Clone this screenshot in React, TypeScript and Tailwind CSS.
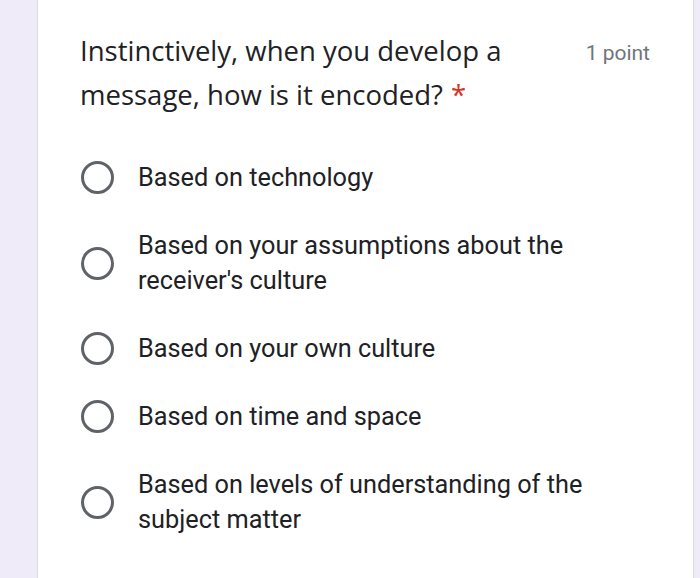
const options = [
  "Based on technology",
  "Based on your assumptions about the receiver's culture",
  "Based on your own culture",
  "Based on time and space",
  "Based on levels of understanding of the subject matter",
];

function Radio() {
  return (
    <div className="w-[33px] h-[33px] shrink-0 rounded-full border-[3px] border-[#5f6368]" />
  );
}

export default function App() {
  return (
    <div className="w-[700px] h-[578px] overflow-hidden bg-[#f0ebf8] pl-[37px] pr-[6px]">
      <div className="h-full bg-white border-x border-[#dadce0] pl-[42px] pr-[43px] pt-[29px]">
        <div className="flex items-start justify-between">
          <div
            className="w-[450px] text-[27.5px] leading-[44px] text-[#202124]"
            style={{ fontFamily: '"Open Sans", sans-serif' }}
          >
            <div>Instinctively, when you develop a</div>
            <div className="flex">
              <span>message, how is it encoded?</span>
              <span className="ml-[8px] text-[#d93025]">*</span>
            </div>
          </div>
          <div
            className="pt-[9px] text-[21px] text-[#70757a]"
            style={{ fontFamily: 'Roboto, sans-serif' }}
          >
            1 point
          </div>
        </div>
        <div className="mt-[43px] flex flex-col gap-[33px] pl-[1px]">
          {options.map((o) => (
            <div key={o} className="flex items-center gap-[24px]">
              <Radio />
              <div
                className="w-[480px] text-[25.3px] leading-[35px] text-[#202124]"
                style={{ fontFamily: 'Roboto, sans-serif' }}
              >
                {o}
              </div>
            </div>
          ))}
        </div>
      </div>
    </div>
  );
}
